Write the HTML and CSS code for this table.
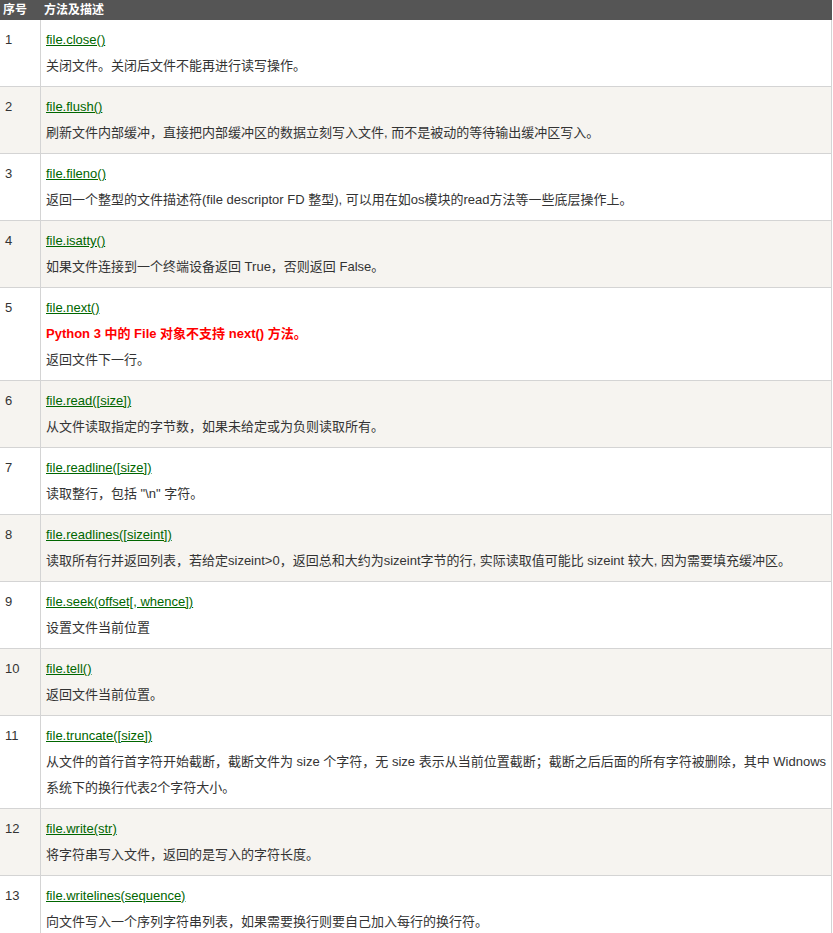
FILE: index.html
```html
<!DOCTYPE html>
<html lang="zh-CN">
<head>
    <meta charset="UTF-8">
    <meta name="viewport" content="width=device-width, initial-scale=1.0">
    <title>Python File 方法</title>
    <link rel="stylesheet" href="styles.css">
</head>
<body>
    <!-- 文件对象方法列表 -->
    <table class="reference">
        <thead>
            <tr>
                <th class="num">序号</th>
                <th>方法及描述</th>
            </tr>
        </thead>
        <tbody>
            <tr>
                <td class="num">1</td>
                <td><a href="#">file.close()</a>
                    <p>关闭文件。关闭后文件不能再进行读写操作。</p></td>
            </tr>
            <tr>
                <td class="num">2</td>
                <td><a href="#">file.flush()</a>
                    <p>刷新文件内部缓冲，直接把内部缓冲区的数据立刻写入文件, 而不是被动的等待输出缓冲区写入。</p></td>
            </tr>
            <tr>
                <td class="num">3</td>
                <td><a href="#">file.fileno()</a>
                    <p>返回一个整型的文件描述符(file descriptor FD 整型), 可以用在如os模块的read方法等一些底层操作上。</p></td>
            </tr>
            <tr>
                <td class="num">4</td>
                <td><a href="#">file.isatty()</a>
                    <p>如果文件连接到一个终端设备返回 True，否则返回 False。</p></td>
            </tr>
            <tr>
                <td class="num">5</td>
                <td><a href="#">file.next()</a>
                    <p class="warn">Python 3 中的 File 对象不支持 next() 方法。</p>
                    <p>返回文件下一行。</p></td>
            </tr>
            <tr>
                <td class="num">6</td>
                <td><a href="#">file.read([size])</a>
                    <p>从文件读取指定的字节数，如果未给定或为负则读取所有。</p></td>
            </tr>
            <tr>
                <td class="num">7</td>
                <td><a href="#">file.readline([size])</a>
                    <p>读取整行，包括 "\n" 字符。</p></td>
            </tr>
            <tr>
                <td class="num">8</td>
                <td><a href="#">file.readlines([sizeint])</a>
                    <p>读取所有行并返回列表，若给定sizeint&gt;0，返回总和大约为sizeint字节的行, 实际读取值可能比 sizeint 较大, 因为需要填充缓冲区。</p></td>
            </tr>
            <tr>
                <td class="num">9</td>
                <td><a href="#">file.seek(offset[, whence])</a>
                    <p>设置文件当前位置</p></td>
            </tr>
            <tr>
                <td class="num">10</td>
                <td><a href="#">file.tell()</a>
                    <p>返回文件当前位置。</p></td>
            </tr>
            <tr>
                <td class="num">11</td>
                <td><a href="#">file.truncate([size])</a>
                    <p>从文件的首行首字符开始截断，截断文件为 size 个字符，无 size 表示从当前位置截断；截断之后后面的所有字符被删除，其中 Widnows 系统下的换行代表2个字符大小。</p></td>
            </tr>
            <tr>
                <td class="num">12</td>
                <td><a href="#">file.write(str)</a>
                    <p>将字符串写入文件，返回的是写入的字符长度。</p></td>
            </tr>
            <tr>
                <td class="num">13</td>
                <td><a href="#">file.writelines(sequence)</a>
                    <p>向文件写入一个序列字符串列表，如果需要换行则要自己加入每行的换行符。</p></td>
            </tr>
        </tbody>
    </table>
</body>
</html>
```

FILE: styles.css
```css
/* 页面基础 */
body {
    margin: 0;
    background-color: #fff;
    color: #333;
    font-family: "Liberation Sans", Arial, "Noto Sans CJK SC", sans-serif;
}

/* 参考表格 */
table.reference {
    border-collapse: collapse;
    width: 833px;
    margin-left: -1px;
}

table.reference th {
    color: #fff;
    background-color: #555;
    border: 1px solid #555;
    font-size: 12px;
    font-weight: bold;
    line-height: 12px;
    padding: 3px;
    text-align: left;
    vertical-align: top;
}

table.reference td {
    font-size: 13px;
    line-height: 2em;
    border: 1px solid #d4d4d4;
    padding: 7px 3px 7px 5px;
    vertical-align: top;
}

/* 序号列 */
table.reference th.num {
    width: 34px;
}

table.reference td.num {
    width: 32px;
}

/* 斑马纹 */
table.reference tbody tr:nth-child(odd) {
    background-color: #fff;
}

table.reference tbody tr:nth-child(even) {
    background-color: #f6f4f0;
}

table.reference a {
    color: #006600;
    text-decoration: underline;
}

table.reference p {
    margin: 0;
}

/* 红色提示 */
table.reference p.warn {
    color: #f00;
    font-weight: bold;
}
```
